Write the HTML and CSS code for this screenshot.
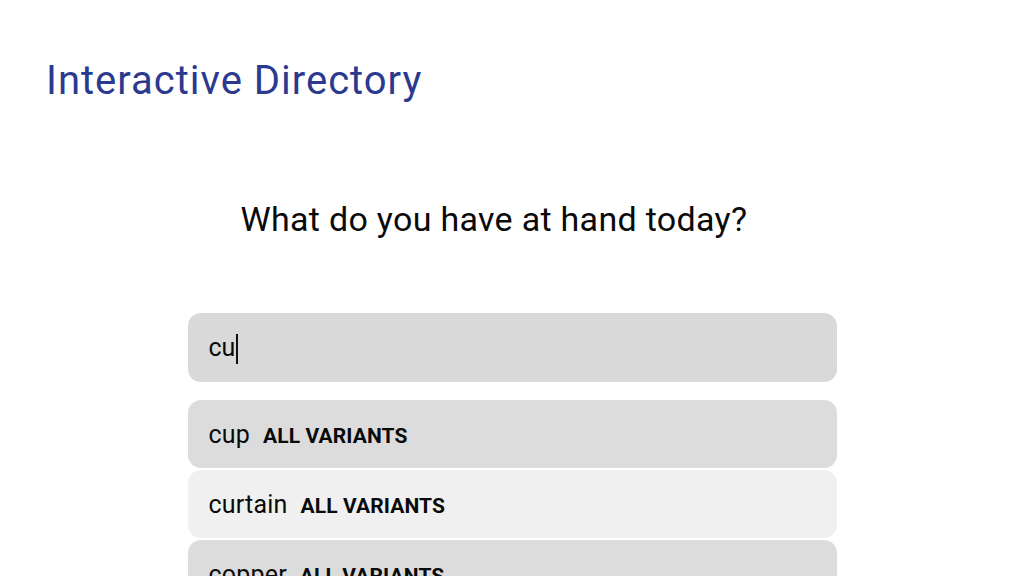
FILE: index.html
```html
<!DOCTYPE html>
<html>
<head>
<meta charset="utf-8">
<link rel="stylesheet" href="styles.css">
</head>
<body>
<header class="app-header">
  <h1 class="app-title">Interactive Directory</h1>
</header>
<main class="search">
  <h2 class="prompt">What do you have at hand today?</h2>
  <div class="search-box"><span class="query">cu</span><span class="caret"></span></div>
  <ul class="results">
    <li class="result result-dark"><span class="label"><span class="name">cup</span><span class="tag">ALL VARIANTS</span></span></li>
    <li class="result result-light"><span class="label"><span class="name">curtain</span><span class="tag">ALL VARIANTS</span></span></li>
    <li class="result result-dark"><span class="label"><span class="name">copper</span><span class="tag">ALL VARIANTS</span></span></li>
  </ul>
</main>
</body>
</html>
```

FILE: styles.css
```css
html, body {
  margin: 0;
  padding: 0;
  background: #ffffff;
  height: 576px;
  overflow: hidden;
  font-family: Roboto, "Noto Sans", sans-serif;
}
.app-header {
  padding: 56px 0 0 46px;
}
.app-title {
  margin: 0;
  font-size: 40px;
  font-weight: 400;
  line-height: 50px;
  letter-spacing: 1px;
  color: #2b3a8f;
}
.search {
  width: 649px;
  margin: 93px auto 0;
}
.prompt {
  margin: 0 0 0 53px;
  font-size: 34px;
  font-weight: 400;
  line-height: 40px;
  letter-spacing: 0.3px;
  color: #0a0a0a;
}
.search-box {
  margin-top: 74px;
  height: 69px;
  border-radius: 13px;
  background: #d9d9d9;
  display: flex;
  align-items: center;
  padding-left: 21px;
  font-size: 25px;
  color: #0a0a0a;
}
.caret {
  display: inline-block;
  width: 1.5px;
  height: 30px;
  background: #111;
  margin-left: 1px;
  margin-top: 2px;
}
.results {
  list-style: none;
  margin: 18px 0 0;
  padding: 0;
  display: flex;
  flex-direction: column;
  gap: 2px;
}
.result {
  height: 68px;
  border-radius: 13px;
  display: flex;
  align-items: center;
  padding-left: 21px;
  color: #0a0a0a;
}
.result-dark { background: #dcdcdc; }
.result-light { background: #f0f0f0; }
.label {
  white-space: nowrap;
}
.name {
  font-size: 25px;
  letter-spacing: 0.2px;
}
.tag {
  margin-left: 13px;
  font-size: 21px;
  font-weight: 700;
  letter-spacing: 0.1px;
}
```
